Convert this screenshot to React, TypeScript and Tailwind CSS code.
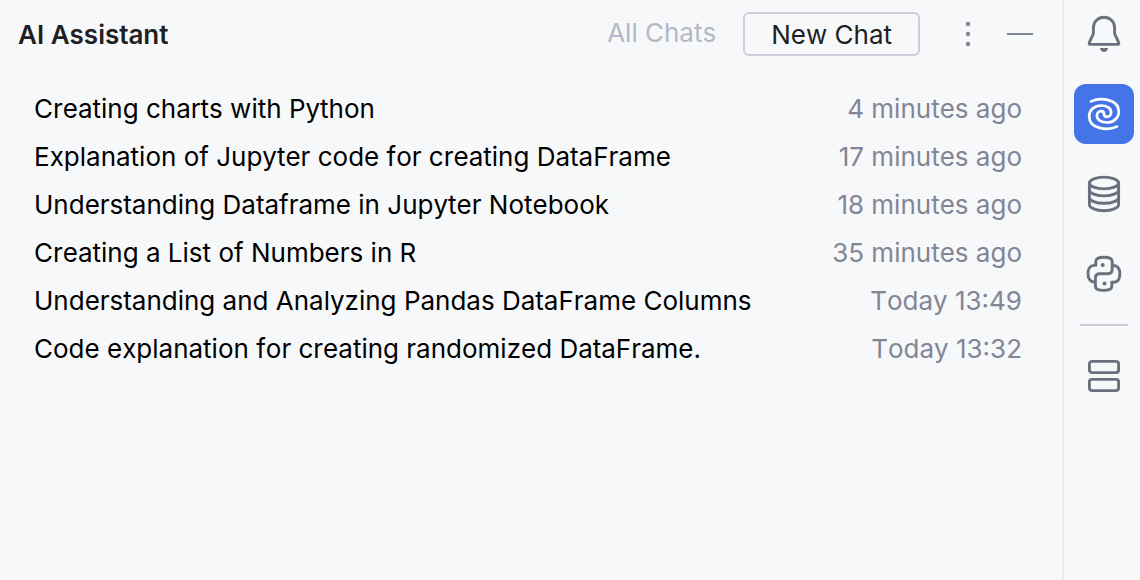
import React from 'react';

interface Chat {
  title: string;
  time: string;
}

const chats: Chat[] = [
  { title: 'Creating charts with Python', time: '4 minutes ago' },
  { title: 'Explanation of Jupyter code for creating DataFrame', time: '17 minutes ago' },
  { title: 'Understanding Dataframe in Jupyter Notebook', time: '18 minutes ago' },
  { title: 'Creating a List of Numbers in R', time: '35 minutes ago' },
  { title: 'Understanding and Analyzing Pandas DataFrame Columns', time: 'Today 13:49' },
  { title: 'Code explanation for creating randomized DataFrame.', time: 'Today 13:32' },
];

interface ToolButtonProps {
  label: string;
  active?: boolean;
  children: React.ReactNode;
}

/** Square button of the tool window bar */
const ToolButton: React.FC<ToolButtonProps> = ({ label, active = false, children }) => (
  <button
    type="button"
    aria-label={label}
    aria-pressed={active}
    className={`flex size-[60px] items-center justify-center rounded-xl ${
      active ? 'bg-[#4474e8] text-white' : 'text-[#6c707e]'
    }`}
  >
    <svg
      className="size-10"
      viewBox="0 0 40 40"
      fill="none"
      stroke="currentColor"
      strokeWidth={2.9}
      strokeLinecap="round"
      strokeLinejoin="round"
    >
      {children}
    </svg>
  </button>
);

const SPIRAL_ARM =
  'M7 7.4C16.5 3 34.8 4.8 34.8 17.8C34.8 24.4 29 28.5 23 28.5C17 28.5 12.9 25.6 12.9 21.8C12.9 19 14.8 17.2 17.2 17.2C19 17.2 20 18.2 20 20';

const ToolBar: React.FC = () => (
  <aside className="flex shrink-0 flex-col items-center gap-5 border-l-2 border-[#ebecf0] pt-1 pr-1.5 pl-2.5">
    <ToolButton label="Notifications">
      <path d="M20 3.2C14 3.2 9.4 7.8 9.4 13.6V19.6L5.3 28.6C4.9 29.6 5.4 30.4 6.4 30.4H33.6C34.6 30.4 35.1 29.6 34.7 28.6L30.6 19.6V13.6C30.6 7.8 26 3.2 20 3.2Z" />
      <path d="M16 34H24C24 36.2 22.2 38 20 38C17.8 38 16 36.2 16 34Z" fill="currentColor" stroke="none" />
    </ToolButton>
    <ToolButton label="AI Assistant" active>
      <path d={SPIRAL_ARM} strokeWidth={2.7} />
      <path d={SPIRAL_ARM} strokeWidth={2.7} transform="rotate(180 20 20)" />
    </ToolButton>
    <ToolButton label="Database">
      <ellipse cx="20" cy="9" rx="14.6" ry="5.9" />
      <path d="M5.4 9V30.8C5.4 34 12 36.7 20 36.7C28 36.7 34.6 34 34.6 30.8V9" />
      <path d="M5.4 16C5.4 19.2 12 21.9 20 21.9C28 21.9 34.6 19.2 34.6 16" />
      <path d="M5.4 23.4C5.4 26.6 12 29.3 20 29.3C28 29.3 34.6 26.6 34.6 23.4" />
    </ToolButton>
    <ToolButton label="Python Packages">
      <path d="M11.4 28.2C6.6 28.4 4 25 4 19.8C4 14.6 6.4 11.4 10 11.4H11.8V7.4C11.8 4.8 15 3.2 20 3.2C25 3.2 28.2 4.8 28.2 7.4V15.2C28.2 18 26.6 19.7 23.8 19.7H15.8C13 19.7 11.4 21.4 11.4 24.2V32.2C11.4 34.8 14.8 36.4 19.6 36.4C24.4 36.4 27.8 34.8 27.8 32.2V28.2H30C33.6 28.2 35.8 25 35.8 19.8C35.8 14.6 33.4 11.4 28.6 11.4" />
      <circle cx="18.7" cy="11" r="2" fill="currentColor" stroke="none" />
      <circle cx="20.5" cy="29.4" r="2" fill="currentColor" stroke="none" />
    </ToolButton>
    <div className="h-0.5 w-12 bg-[#c9ccd6]" />
    <ToolButton label="Services">
      <rect x="5.4" y="5.4" width="29.2" height="11.2" rx="2.6" />
      <rect x="5.4" y="23.4" width="29.2" height="11.2" rx="2.6" />
    </ToolButton>
  </aside>
);

const Header: React.FC = () => (
  <header className="flex items-center pt-3 pr-[22px] pl-[18px]">
    <h1 className="grow pt-0.5 font-semibold text-[#1e1f22]">AI Assistant</h1>
    <button type="button" className="pb-0.5 text-[#b4b8c6]">
      All Chats
    </button>
    <button
      type="button"
      className="ml-[27px] h-11 rounded-md border-2 border-[#cccfda] px-[26px] pt-0.5 text-[#1e1f22]"
    >
      New Chat
    </button>
    <button type="button" aria-label="More options" className="ml-7 text-[#818594]">
      <svg className="size-10" viewBox="0 0 40 40" fill="currentColor">
        <circle cx="20" cy="10" r="2.2" />
        <circle cx="20" cy="20" r="2.2" />
        <circle cx="20" cy="30" r="2.2" />
      </svg>
    </button>
    <button type="button" aria-label="Hide" className="ml-3 text-[#818594]">
      <svg className="size-10" viewBox="0 0 40 40" fill="currentColor">
        <rect x="7" y="19" width="26" height="2" />
      </svg>
    </button>
  </header>
);

export default function App() {
  return (
    <div className="flex min-h-screen bg-[#f7f8fa] font-['Inter',sans-serif] text-[26px] leading-8 [font-kerning:none]">
      <main className="min-w-0 grow">
        <Header />
        <ul className="mt-[29px] pr-10 pl-[34px]">
          {chats.map((chat) => (
            <li key={chat.title} className="flex h-12 items-center justify-between">
              <a href="#" className="text-black">
                {chat.title}
              </a>
              <span className="text-[#838596]">{chat.time}</span>
            </li>
          ))}
        </ul>
      </main>
      <ToolBar />
    </div>
  );
}
